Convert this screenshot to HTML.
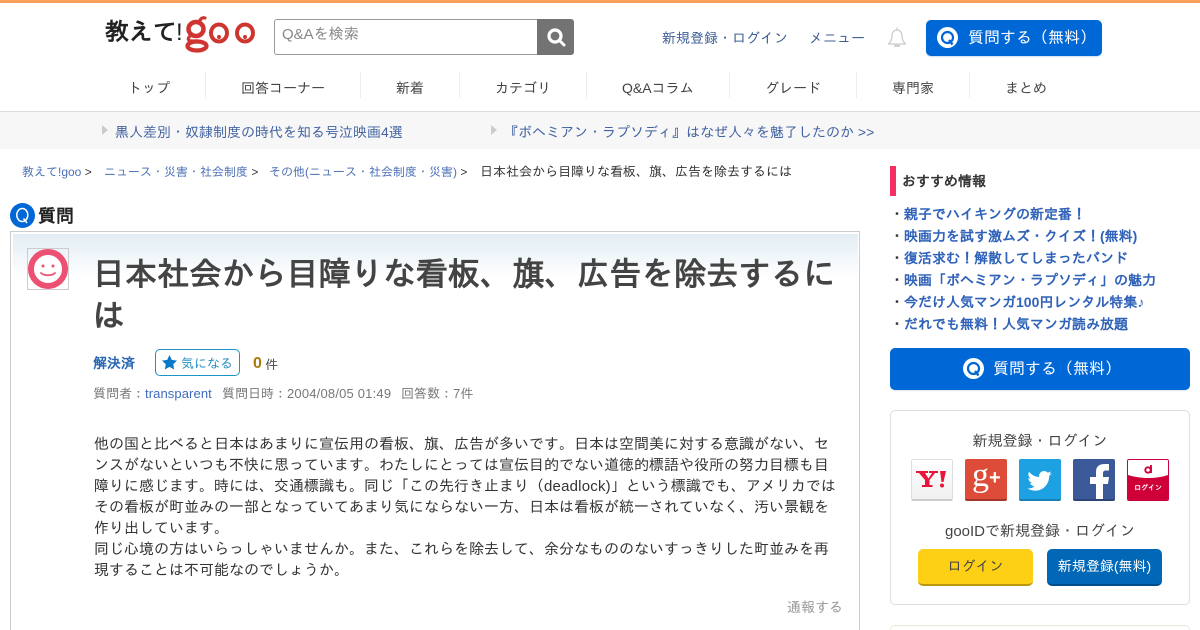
<!DOCTYPE html>
<html lang="ja"><head><meta charset="utf-8"><title>教えて!goo</title>
<style>
html,body{margin:0;padding:0;background:#fff;overflow:hidden;width:1200px;height:630px}
#w{position:relative;width:1200px;height:630px;overflow:hidden;font-family:"Liberation Sans","IPAGothic","WenQuanYi Zen Hei",sans-serif;color:#333}
.a{position:absolute;white-space:nowrap}
.l{color:#3b5998}
.nav{top:78px;font-size:14px;line-height:20px;color:#444;text-align:center}
.sep{position:absolute;top:72px;width:1px;height:26px;background:#eee}
.s{left:890px;font-size:14px;line-height:22px;font-weight:bold;color:#2f62b8}
.s b{color:#333;display:inline-block;width:14px}
.ic{position:absolute;top:459px;width:42px;height:42px;border-radius:2px;overflow:hidden}
</style></head><body><div id="w">
<div class="a" style="left:0;top:0;width:1200px;height:3px;background:#ff9e59"></div>

<div class="a" style="left:105px;top:18px;font-size:24px;line-height:30px;font-weight:bold;color:#222">教えて<span style="font-weight:normal;margin-left:-1px">!</span></div>
<svg class="a" style="left:184px;top:15px" width="74" height="39" viewBox="0 0 74 39"><g fill="none" stroke="#cf3530"><ellipse cx="12" cy="14" rx="7.500" ry="7" stroke-width="4.500"/><ellipse cx="13" cy="31" rx="9.500" ry="4.500" stroke-width="4.200"/><path d="M6 21c-3 3-2 5 2 5h6" stroke-width="3.200"/><path d="M15 8c1-4 3-6 6-5" stroke-width="3.200" stroke-linecap="round"/><ellipse cx="35" cy="18" rx="8" ry="8.500" stroke-width="4"/><ellipse cx="61" cy="18" rx="8" ry="8.500" stroke-width="4"/></g><circle cx="35" cy="22" r="2" fill="#cf3530"/><circle cx="61" cy="22" r="2" fill="#cf3530"/></svg>

<div class="a" style="left:274px;top:19px;width:263px;height:36px;border:1px solid #999;border-right:0;border-radius:3px 0 0 3px;background:#fff;box-sizing:border-box"></div>
<div class="a" style="left:282px;top:25px;font-size:15px;line-height:20px;color:#888">Q&amp;Aを検索</div>
<div class="a" style="left:537px;top:19px;width:37px;height:36px;background:#737373;border-radius:0 3px 3px 0"></div>
<svg class="a" style="left:545px;top:26px" width="22" height="22" viewBox="0 0 22 22"><circle cx="10" cy="10" r="6" fill="none" stroke="#fff" stroke-width="3.200"/><path d="M14.500 14.500l4.500 4.500" stroke="#fff" stroke-width="3" stroke-linecap="round"/></svg>

<div class="a l" style="left:662px;top:28px;font-size:14px;line-height:20px;color:#3f5f95">新規登録・ログイン</div>
<div class="a l" style="left:809px;top:28px;font-size:14px;line-height:20px;color:#3f5f95">メニュー</div>
<svg class="a" style="left:886px;top:26px" width="22" height="22" viewBox="0 0 22 22"><path d="M2.500 18c2-2 3.500-4 3.500-8 0-3.500 2-6 5-6s5 2.500 5 6c0 4 1.500 6 3.500 8z" fill="none" stroke="#ccc" stroke-width="1.300" stroke-linejoin="round"/><path d="M9 19.800h4" stroke="#ccc" stroke-width="2.200" stroke-linecap="round"/><path d="M11 1.500v2" stroke="#ccc" stroke-width="1.300"/></svg>
<div class="a" style="left:926px;top:20px;width:176px;height:36px;background:#0068d6;border-radius:5px;box-shadow:0 1px 1px #cfe0f2"></div>
<svg class="a" style="left:937px;top:27px" width="22" height="22" viewBox="0 0 22 22"><circle cx="10.500" cy="10.500" r="10.500" fill="#fff"/><circle cx="10.500" cy="10.500" r="5.500" fill="none" stroke="#0068d6" stroke-width="2.200"/><path d="M12 13l3.500 4.500" stroke="#0068d6" stroke-width="2.400"/></svg>
<div class="a" style="left:968px;top:28px;font-size:16px;line-height:21px;color:#fff">質問する（無料）</div>

<div class="a nav" style="left:128px">トップ</div><div class="sep" style="left:205px"></div>
<div class="a nav" style="left:241px">回答コーナー</div><div class="sep" style="left:360px"></div>
<div class="a nav" style="left:396px">新着</div><div class="sep" style="left:459px"></div>
<div class="a nav" style="left:495px">カテゴリ</div><div class="sep" style="left:586px"></div>
<div class="a nav" style="left:622px">Q&amp;Aコラム</div><div class="sep" style="left:729px"></div>
<div class="a nav" style="left:765px">グレード</div><div class="sep" style="left:856px"></div>
<div class="a nav" style="left:892px">専門家</div><div class="sep" style="left:969px"></div>
<div class="a nav" style="left:1005px">まとめ</div>

<div class="a" style="left:0;top:111px;width:1200px;height:38px;background:#f7f7f8;border-top:1px solid #ddd;box-sizing:border-box"></div>
<div class="a" style="left:102px;top:125px;border-left:6px solid #ccc;border-top:5px solid transparent;border-bottom:5px solid transparent"></div>
<div class="a" style="left:115px;top:122px;font-size:14px;line-height:20px;color:#4263a0">黒人差別・奴隷制度の時代を知る号泣映画4選</div>
<div class="a" style="left:491px;top:125px;border-left:6px solid #ccc;border-top:5px solid transparent;border-bottom:5px solid transparent"></div>
<div class="a" style="left:504px;top:122px;font-size:14px;line-height:20px;color:#4263a0">『ボヘミアン・ラプソディ』はなぜ人々を魅了したのか &gt;&gt;</div>

<div class="a" style="left:22px;top:163px;font-size:12px;line-height:18px;color:#333"><span style="color:#4a6fb5">教えて!goo</span> &gt;</div>
<div class="a" style="left:104px;top:163px;font-size:12px;line-height:18px;color:#333"><span style="color:#4a6fb5">ニュース・災害・社会制度</span> &gt;</div>
<div class="a" style="left:269px;top:163px;font-size:12px;line-height:18px;color:#333"><span style="color:#4a6fb5">その他(ニュース・社会制度・災害)</span> &gt;</div>
<div class="a" style="left:480px;top:163px;font-size:13px;line-height:18px;color:#333">日本社会から目障りな看板、旗、広告を除去するには</div>

<svg class="a" style="left:10px;top:203px" width="25" height="25" viewBox="0 0 25 25"><circle cx="12.500" cy="12.500" r="12.500" fill="#0068d6"/><ellipse cx="12.300" cy="12" rx="5.500" ry="6.500" fill="none" stroke="#fff" stroke-width="1.500"/><path d="M13.500 15.500l3.500 4.500" stroke="#fff" stroke-width="1.500"/></svg>
<div class="a" style="left:38px;top:205px;font-size:18px;line-height:22px;font-weight:bold;color:#222">質問</div>

<div class="a" style="left:10px;top:231px;width:850px;height:420px;border:1px solid #ccc;box-sizing:border-box"></div>
<div class="a" style="left:13px;top:234px;width:845px;height:44px;background:linear-gradient(#e2edf4,#fff)"></div>
<div class="a" style="left:27px;top:248px;width:42px;height:42px;border:1px solid #ccc;box-sizing:border-box"></div>
<svg class="a" style="left:28px;top:249px" width="40" height="40" viewBox="0 0 40 40"><circle cx="20" cy="20" r="17" fill="#fff" stroke="#ec5173" stroke-width="6"/><circle cx="15" cy="17" r="1.500" fill="#ec5173"/><circle cx="25" cy="17" r="1.500" fill="#ec5173"/><path d="M13 24c3 3 11 3 14 0" fill="none" stroke="#ec5173" stroke-width="1.800" stroke-linecap="round"/></svg>
<div class="a" style="left:92.500px;top:253px;font-size:32.300px;line-height:42px;font-weight:bold;color:#444">日本社会から目障りな看板、旗、広告を除去するに<br>は</div>
<div class="a" style="left:93px;top:353px;font-size:14px;line-height:20px;font-weight:bold;color:#2a68b5">解決済</div>
<div class="a" style="left:155px;top:349px;width:85px;height:27px;border:1px solid #1c94c4;border-radius:5px;box-sizing:border-box"></div>
<svg class="a" style="left:161px;top:354px" width="17" height="17" viewBox="0 0 17 17"><path d="M8.500 1l2.300 4.900 5.200.7-3.800 3.600 1 5.300-4.700-2.600-4.700 2.600 1-5.300L1 6.600l5.200-.7z" fill="#0a78c8"/></svg>
<div class="a" style="left:181px;top:355px;font-size:13px;line-height:18px;color:#2a8fc4">気になる</div>
<div class="a" style="left:253px;top:354px;font-size:16px;line-height:20px;font-weight:bold;color:#a87a0a">0</div>
<div class="a" style="left:265px;top:356px;font-size:13px;line-height:18px;color:#444">件</div>
<div class="a" style="left:93px;top:385px;font-size:13px;line-height:18px;color:#777">質問者：<span style="color:#3f6bbf;letter-spacing:.1px">transparent</span></div>
<div class="a" style="left:222px;top:385px;font-size:13px;line-height:18px;color:#777">質問日時：<span style="letter-spacing:.19px">2004/08/05 01:49</span></div>
<div class="a" style="left:401px;top:385px;font-size:13px;line-height:18px;color:#777">回答数：7件</div>

<div class="a" style="left:94px;top:434px;font-size:15px;line-height:21px;color:#333">他の国と比べると日本はあまりに宣伝用の看板、旗、広告が多いです。日本は空間美に対する意識がない、セ<br>ンスがないといつも不快に思っています。わたしにとっては宣伝目的でない道徳的標語や役所の努力目標も目<br>障りに感じます。時には、交通標識も。同じ「この先行き止まり（<span style="letter-spacing:.2px">deadlock)</span>」という標識でも、アメリカでは<br>その看板が町並みの一部となっていてあまり気にならない一方、日本は看板が統一されていなく、汚い景観を<br>作り出しています。<br>同じ心境の方はいらっしゃいませんか。また、これらを除去して、余分なもののないすっきりした町並みを再<br>現することは不可能なのでしょうか。</div>
<div class="a" style="left:787px;top:598px;font-size:14px;line-height:18px;color:#999">通報する</div>

<div class="a" style="left:890px;top:166px;width:6px;height:30px;background:#f53163"></div>
<div class="a" style="left:902px;top:171px;font-size:14px;line-height:20px;font-weight:bold;color:#333">おすすめ情報</div>
<div class="a s" style="top:203px"><b>・</b>親子でハイキングの新定番！</div>
<div class="a s" style="top:225px"><b>・</b>映画力を試す激ムズ・クイズ！(無料)</div>
<div class="a s" style="top:247px"><b>・</b>復活求む！解散してしまったバンド</div>
<div class="a s" style="top:269px"><b>・</b>映画「ボヘミアン・ラプソディ」の魅力</div>
<div class="a s" style="top:291px"><b>・</b>今だけ人気マンガ100円レンタル特集♪</div>
<div class="a s" style="top:313px"><b>・</b>だれでも無料！人気マンガ読み放題</div>

<div class="a" style="left:890px;top:348px;width:300px;height:42px;background:#0068d6;border-radius:5px;box-shadow:0 1px 1px #dce9f6"></div>
<svg class="a" style="left:963px;top:358px" width="22" height="22" viewBox="0 0 22 22"><circle cx="10.500" cy="10.500" r="10.500" fill="#fff"/><circle cx="10.500" cy="10.500" r="5.500" fill="none" stroke="#0068d6" stroke-width="2.200"/><path d="M12 13l3.500 4.500" stroke="#0068d6" stroke-width="2.400"/></svg>
<div class="a" style="left:993px;top:359px;font-size:16px;line-height:21px;color:#fff">質問する（無料）</div>

<div class="a" style="left:890px;top:410px;width:300px;height:195px;border:1px solid #ddd;border-radius:5px;box-sizing:border-box"></div>
<div class="a" style="left:890px;width:300px;top:432px;text-align:center;font-size:15px;line-height:20px;color:#444">新規登録・ログイン</div>
<div class="ic" style="left:911px;background:linear-gradient(#fff,#f0f0f0);border:1px solid #ddd;box-sizing:border-box;border-bottom:2px solid #ccc"><svg width="40" height="40" viewBox="0 0 40 40" style="position:absolute;left:0;top:0"><path d="M4 11h12v2h-3l3.500 5.500L20 13h-3v-2h9v2h-3l-5.500 7v5h3v2H10v-2h3v-5L7 13H4z" fill="#e8143c"/><path d="M28 11h6l-2.500 11h-2z" fill="#e8143c"/><circle cx="30" cy="25.500" r="2" fill="#e8143c"/></svg></div>
<div class="ic" style="left:965px;background:#dd4b39;border-bottom:2px solid #a5372a;box-sizing:border-box"><div style="position:absolute;left:7px;top:-3px;font:34px/40px 'Liberation Serif',serif;color:#fff">g</div><div style="position:absolute;left:24px;top:9px;font:bold 20px/20px 'Liberation Sans',sans-serif;color:#fff">+</div></div>
<div class="ic" style="left:1019px;background:#1da1e2;border-bottom:2px solid #1681b8;box-sizing:border-box"><svg width="42" height="42" viewBox="0 0 24 24" style="position:absolute;left:0;top:0"><path transform="translate(5 5.500) scale(.58)" d="M23.500 4.600c-.9.400-1.800.7-2.800.8 1-.6 1.800-1.600 2.100-2.700-.9.600-2 1-3.100 1.200C18.800 2.900 17.500 2.300 16.100 2.300c-2.700 0-4.900 2.200-4.900 4.900 0 .4 0 .8.100 1.100C7.300 8.100 3.700 6.100 1.300 3.100c-.4.700-.7 1.600-.7 2.500 0 1.700.9 3.200 2.200 4.100-.8 0-1.600-.2-2.200-.6v.1c0 2.400 1.700 4.400 3.900 4.800-.4.100-.8.200-1.300.2-.3 0-.6 0-.9-.1.600 2 2.400 3.400 4.600 3.400-1.700 1.300-3.800 2.100-6.100 2.100-.4 0-.8 0-1.200-.1 2.200 1.400 4.800 2.200 7.500 2.200 9.100 0 14-7.500 14-14v-.6c1-.7 1.800-1.600 2.600-2.500z" fill="#fff"/></svg></div>
<div class="ic" style="left:1073px;background:#3b5998;border-bottom:2px solid #2d4474;box-sizing:border-box"><svg width="42" height="42" viewBox="0 0 42 42" style="position:absolute;left:0;top:0"><path d="M23 42V25h-6v-7h6v-5c0-6 3.500-8 9-8h4v6.500h-3c-2.500 0-3 1.300-3 3V18h6l-1 7h-5v17z" fill="#fff"/></svg></div>
<div class="ic" style="left:1127px;background:#fff;border:1px solid #c8003c;box-sizing:border-box"><svg width="40" height="40" viewBox="0 0 40 40" style="position:absolute;left:0;top:0"><path d="M0 15c12 4 28 4 40 0v25H0z" fill="#cf0038"/><circle cx="20" cy="10" r="2.700" fill="none" stroke="#cf0038" stroke-width="1.900"/><path d="M23 5v8" stroke="#cf0038" stroke-width="1.900"/></svg><div style="position:absolute;left:0;width:40px;top:24px;text-align:center;font-size:7px;line-height:10px;font-weight:bold;color:#fff">ログイン</div></div>
<div class="a" style="left:890px;width:300px;top:522px;text-align:center;font-size:15px;line-height:20px;color:#444">gooIDで新規登録・ログイン</div>
<div class="a" style="left:918px;top:549px;width:115px;height:37px;background:#fdd015;border-bottom:2px solid #b9970f;border-radius:5px;box-sizing:border-box;text-align:center;font-size:14px;line-height:35px;color:#444">ログイン</div>
<div class="a" style="left:1047px;top:549px;width:115px;height:37px;background:#0068b7;border-bottom:2px solid #004e8a;border-radius:5px;box-sizing:border-box;text-align:center;font-size:14px;line-height:35px;color:#fff">新規登録(無料)</div>
<div class="a" style="left:890px;top:625px;width:300px;height:20px;border:1px solid #e8e8d8;border-radius:5px;box-sizing:border-box;background:#fff"></div>
</div></body></html>
